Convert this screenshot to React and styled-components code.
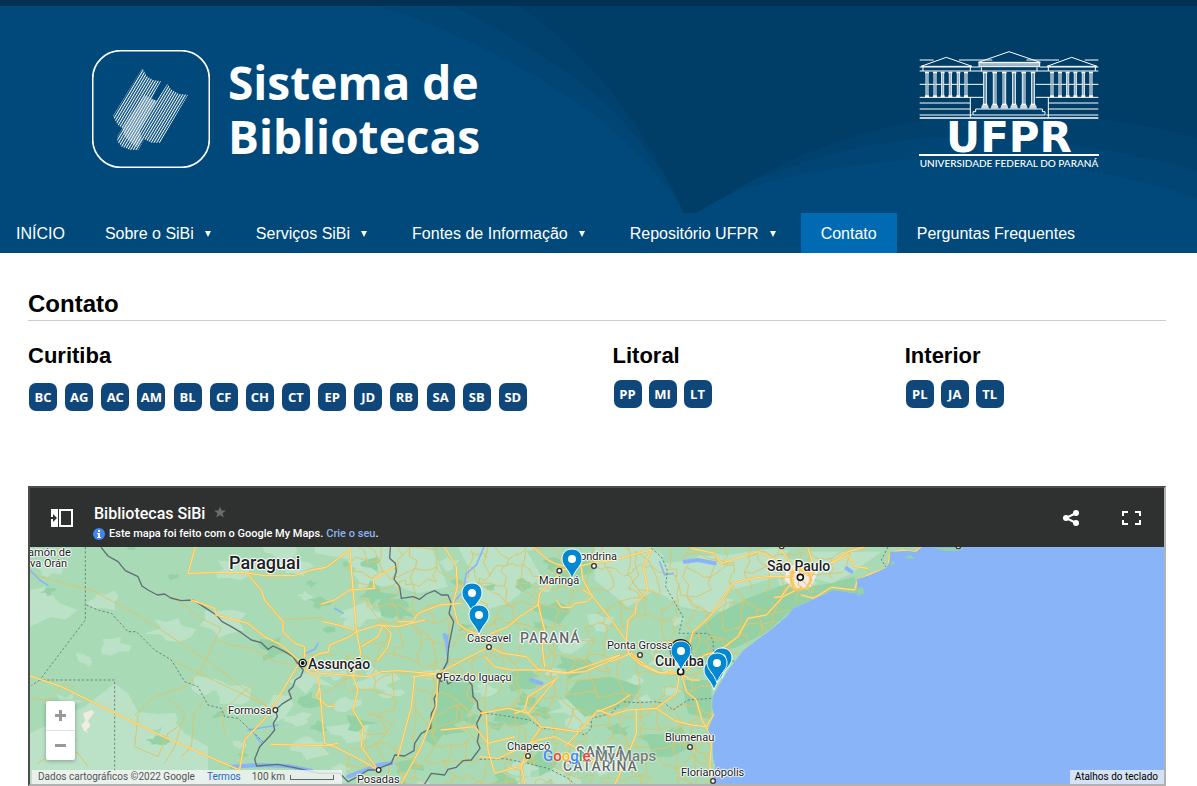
import React from "react";
import styled, { createGlobalStyle, css } from "styled-components";

const GlobalStyle = createGlobalStyle`
  *, *::before, *::after { box-sizing: border-box; }
  body { margin: 0; background: #fff; color: #000; font: 16px/24px Arial, "Liberation Sans", sans-serif; }
  h1, h2, p, ul { margin: 0; padding: 0; }
  ul { list-style: none; }
  a { color: inherit; text-decoration: none; }
  button { padding: 0; border: 0; background: none; color: inherit; font: inherit; cursor: pointer; }
  svg { display: block; }
`;

/* ---------- Header ---------- */

const Header = styled.header`
  position: relative;
  background: #00497a;
  border-top: 6px solid #003152;
`;
const HeaderArt = styled.svg`
  position: absolute;
  inset: 0;
  width: 100%;
  height: 100%;
`;
const HeaderInner = styled.div`
  position: relative;
  display: flex;
  justify-content: space-between;
  align-items: flex-start;
  padding: 44px 98px 43px 92px;
`;
const Brand = styled.a`
  display: flex;
  align-items: center;
  gap: 18px;
  color: #fff;
`;
const BrandName = styled.span`
  font: 700 46px/54px "Open Sans", "Noto Sans", sans-serif;
`;
const University = styled.a`
  display: flex;
  flex-direction: column;
  align-items: center;
  width: 180px;
  color: #fff;
`;
const UniversityInitials = styled.span`
  font: 700 42px/33px "DejaVu Sans", sans-serif;
`;
const UniversityName = styled.span`
  width: 100%;
  border-top: 2px solid #fff;
  font: 500 10px/14px Lato, sans-serif;
  text-align: center;
  white-space: nowrap;
`;

const Nav = styled.nav`
  background: #00497a;
  padding-right: 20px;
`;
const NavList = styled.ul`
  display: flex;
  flex-wrap: wrap;
  margin-left: -4px;
`;
const NavLink = styled.a`
  display: flex;
  align-items: center;
  height: 40px;
  padding: 2px 20px 0;
  color: #fff;
  background: ${(p) => (p.$active ? "#006ab3" : "transparent")};
`;
const Caret = styled.span`
  margin: 0 5px 0 11px;
  border: 3px solid transparent;
  border-top: 6px solid #fff;
  border-bottom: 0;
`;

/* ---------- Contact section ---------- */

const Main = styled.main`
  padding: 38px 31px 0 28px;
`;
const PageTitle = styled.h1`
  padding-bottom: 3px;
  border-bottom: 1px solid #ccc;
  font-size: 24px;
  line-height: 26px;
`;
const Regions = styled.div`
  display: grid;
  grid-template-columns: 2fr 1fr 1fr;
  margin-right: -31px;
  min-height: 165px;
  padding-top: 22px;
`;
const RegionTitle = styled.h2`
  font-size: 22px;
  line-height: 26px;
`;
const Badges = styled.ul`
  display: flex;
  flex-wrap: wrap;
  gap: 7px;
  padding: 11px 0 0 1px;
  ${(p) =>
    p.$wide &&
    css`
      justify-content: space-between;
      max-width: 499px;
      padding-top: 14px;
    `}
`;
const Badge = styled.a`
  display: flex;
  align-items: center;
  justify-content: center;
  width: 28px;
  height: 28px;
  border-radius: 7px;
  background: #10477a;
  color: #fff;
  font: 700 13px/28px "Open Sans", "Noto Sans", sans-serif;
`;

/* ---------- Map ---------- */

const MapFrame = styled.section`
  border: 2px solid;
  border-color: #4c4c4c #b2b2b2 #b2b2b2 #4c4c4c;
  font-family: Roboto, sans-serif;
`;
const MapHeader = styled.div`
  display: flex;
  align-items: center;
  height: 59px;
  padding: 0 22px 0 20px;
  background: #2f3130;
  color: #fff;
`;
const MapHeading = styled.div`
  flex: 1;
  padding: 8px 0 0 20px;
`;
const MapTitle = styled.div`
  display: flex;
  align-items: center;
  gap: 9px;
  font-size: 16px;
  font-weight: 500;
  line-height: 24px;
  svg { margin-bottom: 4px; }
`;
const MapNote = styled.p`
  display: flex;
  align-items: center;
  font-size: 11px;
  font-weight: 500;
  line-height: 16px;
  a { color: #8ab4f0; margin-left: 3px; }
  svg { margin: 0 4px 0 -1px; }
`;
const MapActions = styled.div`
  display: flex;
  gap: 40px;
`;
const MapViewport = styled.div`
  position: relative;
  height: 237px;
  overflow: hidden;
  background: #8ab4f8;
`;
const MapCanvas = styled.div`
  position: absolute;
  inset: 0 auto auto 0;
  width: 1134px;
  height: 237px;
`;
const Place = styled.span`
  position: absolute;
  left: ${(p) => p.$x}px;
  top: ${(p) => p.$y}px;
  transform: translateY(-50%);
  color: ${(p) => (p.$state ? "#5f6b6b" : "#202124")};
  font-size: ${(p) => p.$size || 11}px;
  font-weight: ${(p) => (p.$size ? 500 : 400)};
  line-height: 1;
  white-space: nowrap;
  letter-spacing: ${(p) => (p.$state ? "1px" : "normal")};
  text-shadow: 0 0 2px #fff, 0 0 2px #fff, 1px 0 1px #fff, -1px 0 1px #fff, 0 1px 1px #fff, 0 -1px 1px #fff;
`;
const Pin = styled.svg`
  position: absolute;
  left: ${(p) => p.$x - 11}px;
  top: ${(p) => p.$y - 31}px;
`;
const ZoomControl = styled.div`
  position: absolute;
  left: 16px;
  bottom: 24px;
  display: flex;
  flex-direction: column;
  width: 29px;
  border-radius: 2px;
  background: #fff;
  box-shadow: 0 1px 4px rgba(0, 0, 0, 0.3);
  button {
    display: grid;
    place-items: center;
    height: 29px;
  }
  button + button { border-top: 1px solid #e0e0e0; height: 30px; }
`;
const Credits = styled.div`
  position: absolute;
  left: 2px;
  bottom: 0;
  display: flex;
  align-items: center;
  height: 14px;
  width: 310px;
  padding: 0 6px;
  background: rgba(245, 245, 245, 0.78);
  color: #555;
  font-size: 10px;
  line-height: 14px;
  white-space: nowrap;
  a { color: #2a66d0; margin: 0 11px 0 12px; }
`;
const Scale = styled.span`
  width: 44px;
  height: 5px;
  margin-left: 5px;
  border: 1px solid #666;
  border-top: 0;
`;
const Shortcuts = styled.button`
  position: absolute;
  right: 0;
  bottom: 0;
  height: 14px;
  padding: 0 6px 0 5px;
  background: #d5e2f6;
  color: #000;
  font-size: 10px;
  line-height: 14px;
`;
const MapsLogo = styled.span`
  position: absolute;
  left: 513px;
  top: 199px;
  display: flex;
  gap: 4px;
  font: 500 15px/20px Roboto, sans-serif;
  text-shadow: 0 0 2px #fff, 0 0 2px #fff;
`;
const Tint = styled.span`
  color: ${(p) => p.$c};
`;

/* ---------- Map artwork ---------- */

// Repeatable pseudo-random value for the local road web and vegetation patches.
const noise = (a, b, c = 0) => {
  const v = Math.sin(a * 127.1 + b * 311.7 + c * 74.7) * 43758.5453;
  return v - Math.floor(v);
};

const localRoads = (() => {
  const step = 52;
  const at = (i, j) => [
    Math.round(i * step + (noise(i, j) - 0.5) * 44),
    Math.round(170 + j * step + (noise(i, j, 5) - 0.5) * 44),
  ];
  const bend = (p, q, s) =>
    `M${p}L${Math.round(p[0] * 0.65 + q[0] * 0.35 + (noise(p[0], q[1], s) - 0.5) * 24)} ${Math.round(
      p[1] * 0.65 + q[1] * 0.35 + (noise(q[0], p[1], s) - 0.5) * 24
    )}L${Math.round(p[0] * 0.3 + q[0] * 0.7 + (noise(p[1], q[0], s) - 0.5) * 22)} ${Math.round(
      p[1] * 0.3 + q[1] * 0.7 + (noise(q[1], p[0], s) - 0.5) * 22
    )}L${q}`;
  let d = "";
  for (let i = -3; i < 27; i++) {
    for (let j = 0; j < 16; j++) {
      if (noise(i, j, 1) > 0.28) d += bend(at(i, j), at(i + 1, j), 1);
      if (noise(i, j, 2) > 0.3) d += bend(at(i, j), at(i, j + 1), 2);
      if (noise(i, j, 3) > 0.84) d += bend(at(i, j), at(i + 1, j + 1), 3);
    }
  }
  return d;
})();

const patches = (count, seed, x0, width, size) => {
  let d = "";
  for (let n = 0; n < count; n++) {
    const cx = x0 + noise(n, seed) * width;
    const cy = 190 + noise(n, seed, 2) * 730;
    const r = size * (0.35 + noise(n, seed, 3));
    for (let k = 0; k < 11; k++) {
      const a = (k / 11) * Math.PI * 2;
      const q = r * (0.35 + noise(n, k, seed) * 0.85);
      d += `${k ? "L" : "M"}${Math.round(cx + Math.cos(a) * q * 1.4)} ${Math.round(cy + Math.sin(a) * q * 0.8)}`;
    }
    d += "Z";
  }
  return d;
};

const lightPatches = patches(85, 4, -1100, 2300, 42);
const darkPatches = patches(38, 9, -300, 1350, 36);
const westDark = patches(9, 13, -1050, 700, 30);

const LAND =
  "M-1110 195H1576L1556 215L1526 212L1476 215L1474 245L1466 262L1416 285L1376 298L1378 332L1370 340L1306 330L1246 358L1186 385L1165 410L1110 455L1070 485L1035 512L1014 540L990 572L960 620L944 650L942 680L948 705L930 750L944 780L945 830L952 860L940 915H-1110Z";

const HIGHWAYS = [
  // Western plains, Paraguay
  "M-1104 588L-1010 620L-700 772L-480 868",
  "M-608 201L-630 280L-560 278L-460 278L-400 287L-310 287L-260 270L-215 262L-145 210",
  "M-455 278L-410 330L-400 360L-345 425L-345 455L-310 490L-280 500L-280 530",
  "M-620 360L-550 385L-545 405L-450 430L-400 470L-350 495L-310 530L-285 550",
  "M-145 201L-135 330L-125 450L-112 520L-135 590L-120 630L-135 690L-105 740L-110 800L-60 870",
  "M-285 550L-235 520L-210 517L-205 495L-145 470L-125 455L-60 435L0 440L80 420",
  "M-285 552L-230 580L-160 585L-90 590L-50 575L0 572L117 582",
  "M-300 555L-375 680L-385 700L-460 780L-475 868",
  "M-280 570L-240 590L-235 620L-245 650L-210 680L-190 678",
  "M-235 625L-225 740L-220 790L-190 800L-120 835L-60 870",
  "M-380 793L-300 795L-220 797L-180 790",
  "M-230 372L-190 360L-145 330L-70 325L-75 300L-10 260",
  "M-225 425L-180 435L-130 450", "M-110 500L-60 470L-45 435L-20 460L-30 500L-60 540",
  // Paraná
  "M140 201L175 260L178 320L165 372L180 430L205 450L242 462L275 500L315 520L385 530L420 568L510 578L580 555L620 540L665 525",
  "M0 425L45 425L60 400L125 375L165 372L190 370",
  "M275 500L215 530L130 575L120 582L45 590",
  "M275 462L330 440L365 410L420 375L425 340L475 290L484 272L550 255",
  "M420 372L440 450L433 500L440 560",
  "M405 201L450 240L470 250L520 265L580 250L650 240L700 225L760 210",
  "M550 262L555 300L580 345L640 420L690 490L690 520L730 555L780 578L845 580L880 600L905 600",
  "M555 330L585 348L565 365L530 370L520 382L490 382L475 360",
  "M760 210L735 260L750 330L715 370L712 400L690 420L685 480",
  "M665 525L620 550L560 575L500 580L430 570L340 570L290 560L262 530",
  "M640 545L700 520L740 555L790 580L825 568",
  "M850 575L885 455L935 410L1005 310L1060 295L1110 290L1180 290",
  "M1205 260L1175 290L1195 330L1155 350L1105 405L1050 415L1020 470L980 500L955 515L920 525L865 572",
  "M850 580L865 635L895 660L912 720L935 760L940 800L935 860L943 905",
  "M845 580L835 640L775 685L690 690L640 705L600 690L550 748L500 800",
  "M775 685L830 722L880 735L925 740L955 690",
  "M600 695L660 670L695 645", "M715 690L715 760L680 850L650 915",
  "M120 585L115 680L70 800L10 910", "M50 590L40 680L0 830",
  "M250 700L330 685L390 700L480 590", "M265 705L270 810L290 880L360 860L400 830",
  "M350 700L380 690L430 740L540 755", "M380 690L390 650L470 600",
  "M245 830L300 835L420 780L470 770L530 800L570 840L640 850L690 840",
  "M130 750L230 740L270 790L350 770", "M430 740L390 800L370 860L380 910",
  // São Paulo
  "M880 205L950 220L970 250L1080 215L1140 240L1180 280", "M1146 201L1176 250L1186 290",
  "M1186 300L1150 350L1130 352", "M1205 260L1230 285L1290 255L1350 215L1400 201",
  "M1210 345L1246 355L1300 322L1370 330L1378 300L1416 282L1470 262L1475 220L1510 210L1550 215L1570 201",
  "M1240 270L1300 250L1350 225L1370 260L1410 265", "M1230 205L1245 250L1215 285",
];

const RIVER_BORDERS = [
  "M-890 203L-870 228L-840 245L-818 272L-780 290L-768 318L-750 330L-722 345L-700 342L-682 354L-650 362L-615 360L-580 382L-545 405L-528 425L-500 440L-470 458L-440 480L-410 488L-390 508L-375 498L-345 512L-315 530L-300 552L-284 570L-292 590L-308 600L-315 620L-328 632L-320 655L-345 670L-368 690L-362 710L-374 730L-370 750L-388 772L-415 800L-430 838L-424 858L-360 853L-300 865L-235 880L-175 880L-150 905L-120 890L-90 870L-70 870L-20 850L-10 825L20 828L48 812L50 790L70 760L98 745L100 700L112 680L108 655L120 635L125 590",
  "M-23 203L-25 235L-8 250L-5 275L-12 298L5 320L10 355L45 350L65 358L85 342L110 332L130 345L150 345L160 370L153 400L167 425L152 500L148 545L125 590L128 605L145 598L150 612L180 595L210 602L222 615L225 650L238 665L240 685L252 698L236 730L243 760L238 785L246 805L220 840L195 842L175 862L150 868L140 885L100 880L80 912",
];
const DASHED_BORDERS = [
  "M-938 201V420L-1075 600H-850V880", "M-1075 600L-1100 617",
  "M-935 375L-900 390L-860 400L-810 455L-785 455L-730 510L-680 540L-640 605L-600 620L-570 675L-530 685L-520 710L-480 715L-400 790",
  "M265 700L305 705L395 720L430 745L530 752L560 765L580 745L580 715L640 700L670 665L720 668L770 665L800 670L825 690L870 660L940 655",
  "M760 205L790 230L808 270L803 320L855 410L843 460L930 460L945 480L947 530L1014 545",
  "M245 838L320 836L390 850L450 865L510 895L530 912", "M1470 201L1450 240L1465 262",
];
const COUNTRY_TRACKS = [
  "M-1104 280L-1000 310L-920 330L-780 405L-680 470L-560 550L-380 690L-370 700",
  "M-690 345L-640 375L-600 410L-530 445L-550 480L-590 570L-640 620L-730 650L-790 705",
  "M-540 480L-500 495L-440 505L-380 540L-310 555", "M-670 545L-450 650L-380 685",
  "M-690 655L-640 700L-670 800L-700 850", "M-580 660L-610 700L-620 800L-650 830",
  "M-780 705L-790 800L-720 830L-690 760L-660 740", "M-520 760L-530 700L-470 640L-430 610",
  "M-1100 655L-1050 660L-1000 610L-970 620", "M-1080 850L-1010 800L-960 820L-930 860",
  "M-345 420L-230 412L-225 425", "M-290 525L-190 525", "M-220 640L-160 600L-140 590",
];
const RIVERS = [
  "M257 203L235 255L205 280L195 335L168 365", "M-1104 270L-1075 300L-1050 316", "M-275 520L-250 508L-240 490",
  "M-190 385L-165 400", "M150 465L145 500L150 545L125 590L118 650", "M-450 750L-360 735", "M-430 763L-410 790", "M785 245L800 285L825 280",
];

function MapArt() {
  return (
    <svg width="1134" height="237" viewBox="-1104 201 3402 711" aria-hidden="true">
      <defs>
        <clipPath id="land"><path d={LAND} /></clipPath>
        <clipPath id="east">
          <path d="M-205 195H1460L1180 380L940 650V915H-100L-175 860L-90 700L-210 560L-100 480L-60 420L-180 300Z" />
        </clipPath>
      </defs>
      <rect x="-1104" y="201" width="3402" height="711" fill="#8ab4f8" />
      <path d={LAND} fill="#a8dab5" />
      <g clipPath="url(#land)">
        <path d={lightPatches} fill="#bbe2c6" />
        <path d="M-1104 330L-1060 320L-1015 370L-960 390L-1000 420L-1040 410L-1104 440ZM-850 610L-810 640L-760 735L-720 770L-690 700L-640 760L-570 800L-570 912H-1104V760L-1020 720L-940 680ZM-250 201H100L150 320L60 340L-60 300L-130 240L-250 220ZM180 201H380L430 290L330 370L220 400L190 340L210 260ZM590 201H760L800 250L950 230L1150 201L1180 280L1000 330L950 400L850 380L770 330L690 380L590 300ZM1240 215H1450L1360 280L1300 310L1230 290Z" fill="#bbe2c6" />
        <path d={westDark} fill="#94d2a5" />
        <path d={darkPatches} fill="#94d2a5" />
        <path d="M1170 310L1060 350L960 400L900 450L860 470L870 510L960 520L1020 500L1110 455L1186 385L1246 358L1230 330ZM130 600L220 610L235 660L200 720L150 740L110 800L80 780L110 680ZM540 600L640 590L730 620L690 680L560 710L500 650ZM850 600L940 600L940 720L870 700ZM1230 320L1300 310L1370 290L1378 340L1300 335L1240 350ZM810 760L850 740L880 800L820 830L740 830Z" fill="#94d2a5" />
        <path d="M-945 700L-918 690L-912 698L-930 722L-922 738L-935 750L-930 758L-942 752L-950 735L-938 722ZM1165 260L1210 250L1260 275L1240 320L1190 330L1160 300Z" fill="#f2ece0" />
        <g clipPath="url(#east)"><path d={localRoads} fill="none" stroke="#dcc56c" strokeWidth="3" strokeLinejoin="round" /></g>
        <g fill="none" strokeLinejoin="round" strokeLinecap="round">
          <g stroke="#d9c672" strokeWidth="3">{COUNTRY_TRACKS.map((d) => <path key={d} d={d} />)}</g>
          <g stroke="#8ab4f8" strokeWidth="5">{RIVERS.map((d) => <path key={d} d={d} />)}</g>
          <path d="M-500 860L-420 855L-330 858L-260 872M-150 890L-110 875L-60 855L-20 850M140 465L150 500M400 600L430 610M860 245L900 240L950 250M1346 265L1360 275" stroke="#8ab4f8" strokeWidth="12" />
          <g stroke="#5f6f75" strokeWidth="4">{RIVER_BORDERS.map((d) => <path key={d} d={d} />)}</g>
          <g stroke="#6c8580" strokeWidth="3" strokeDasharray="7 6" strokeLinecap="butt">{DASHED_BORDERS.map((d) => <path key={d} d={d} />)}</g>
          <g stroke="#f6c050" strokeWidth="6">{HIGHWAYS.map((d) => <path key={d} d={d} />)}</g>
          <g stroke="#ffe293" strokeWidth="3">{HIGHWAYS.map((d) => <path key={d} d={d} />)}</g>
          <path d="M1180 280L1195 268L1230 275L1240 300L1225 325L1190 330L1180 305Z" stroke="#f9c55f" strokeWidth="7" />
        </g>
      </g>
      <path d="M1374 325L1395 322L1398 340L1378 348ZM1520 235L1536 224L1552 236ZM1478 245L1492 248L1480 258ZM1600 203H1700L1680 212L1640 212Z" fill="#94d2a5" />
      <g fill="#fff" stroke="#333" strokeWidth="4">
        {[[484, 272], [588, 258], [273, 501], [124, 588], [726, 525], [876, 801], [390, 828], [945, 903], [-368, 690], [-58, 870], [1151, 199], [1681, 199]].map(([x, y]) => (
          <circle key={`${x}-${y}`} cx={x} cy={y} r="7" />
        ))}
        <circle cx="848" cy="575" r="9" stroke="#111" strokeWidth="5" />
        <circle cx="1207" cy="292" r="9" stroke="#111" strokeWidth="5" />
        <circle cx="-286" cy="549" r="11" stroke="#111" strokeWidth="4" />
      </g>
      <circle cx="-286" cy="549" r="6" fill="#111" />
      <circle cx="848" cy="510" r="33" fill="#202124" />
    </svg>
  );
}

const PLACES = [
  ["amón de", -2, 5], ["va Orán", 0, 16], ["Paraguai", 199, 16, 18], ["Assunção", 278, 117, 14],
  ["Formosa", 198, 163], ["Posadas", 327, 232], ["Foz do Iguaçu", 413, 130], ["Cascavel", 437, 91],
  ["Maringá", 509, 33], ["ondrina", 550, 9], ["Ponta Grossa", 577, 98], ["Curitiba", 625, 114, 14],
  ["Blumenau", 635, 190], ["Florianópolis", 651, 225], ["Chapecó", 477, 199], ["São Paulo", 737, 19, 14],
];
const STATES = [["PARANÁ", 490, 91, 14], ["SANTA", 546, 205, 14], ["CATARINA", 533, 219, 14]];
const PINS = [[542, 32], [442, 66], [449, 88], [651, 124], [692, 131], [684, 143], [687, 136]];

/* ---------- Logos and icons ---------- */

function LibraryMark() {
  return (
    <svg width="118" height="118" viewBox="0 0 354 354" aria-hidden="true">
      <defs>
        <pattern id="hatch" width="7" height="20" patternUnits="userSpaceOnUse" patternTransform="rotate(31)">
          <rect width="3" height="20" fill="#fff" />
        </pattern>
      </defs>
      <rect x="2" y="2" width="350" height="350" rx="84" fill="none" stroke="#fff" strokeWidth="5" />
      <g transform="translate(39 30)">
        <path fill="url(#hatch)" d="M112 24L125 48L145 60L168 64L152 92L140 118L155 122L187 72L200 90L222 102L249 104L165 248H140L118 238L100 270L75 269L50 260L38 245L36 230L52 205L38 195L24 168Z" />
        <path fill="#fff" opacity=".35" d="M118 105L155 122L105 212L110 238L95 262L60 230L52 205Z" />
      </g>
    </svg>
  );
}

function Column({ x, top, bottom, w }) {
  return (
    <g>
      <rect x={x - w} y={top} width={w * 2} height="5" fill="#fff" />
      <path d={`M${x - w + 3} ${top + 4}V${bottom}M${x + w - 3} ${top + 4}V${bottom}`} stroke="#fff" strokeWidth="3" />
      <path d={`M${x} ${top + 4}V${bottom}`} stroke="#9db7c9" strokeWidth="4" />
      <rect x={x - w} y={bottom - 5} width={w * 2} height="6" fill="#fff" />
    </g>
  );
}

function Building() {
  const wing = [0, 24, 47, 70, 94, 117];
  const center = [256, 285, 314, 343, 372, 400];
  return (
    <svg width="180" height="71" viewBox="58 28 540 213" fill="none" stroke="#fff" strokeWidth="3" aria-hidden="true">
      <path d="M60 58H102M178 58H278M380 58H478M555 58H596M60 79H240M420 79H596M60 91H596M60 131H250M408 131H596M60 170H250M408 170H596M60 187H212M446 187H596M60 205H212M446 205H596M60 223H218M440 223H596" />
      <path d="M60 232H596" strokeWidth="5" />
      <path d="M64 77L140 50L217 77ZM442 77L516 50L592 77ZM236 65L328 33L422 65ZM70 79V91M212 79V91M446 79V91M587 79V91M212 170V232M446 170V232" />
      <path d="M238 66H420V78H238Z" fill="#9db7c9" />
      <path d="M245 80V92M412 80V92M228 205H428V213H436V223H220V213H228Z" />
      <g stroke="none">
        {wing.map((x) => <Column key={x} x={82 + x} top={93} bottom={169} w={6} />)}
        {wing.map((x) => <Column key={x} x={457 + x} top={93} bottom={169} w={6} />)}
        {center.map((x) => <Column key={x} x={x} top={93} bottom={194} w={7} />)}
        {center.map((x) => <path key={x} d={`M${x - 9} 193H${x + 9}L${x + 12} 204H${x - 12}Z`} fill="#cbd9e3" />)}
      </g>
    </svg>
  );
}

const NAV = [
  { text: "INÍCIO" }, { text: "Sobre o SiBi", menu: true }, { text: "Serviços SiBi", menu: true },
  { text: "Fontes de Informação", menu: true }, { text: "Repositório UFPR", menu: true },
  { text: "Contato", active: true }, { text: "Perguntas Frequentes" },
];
const REGIONS = [
  { name: "Curitiba", wide: true, codes: ["BC", "AG", "AC", "AM", "BL", "CF", "CH", "CT", "EP", "JD", "RB", "SA", "SB", "SD"] },
  { name: "Litoral", codes: ["PP", "MI", "LT"] },
  { name: "Interior", codes: ["PL", "JA", "TL"] },
];

export default function App() {
  return (
    <>
      <GlobalStyle />
      <Header>
        <HeaderArt viewBox="0 6 1197 207" preserveAspectRatio="none" aria-hidden="true">
          <path fill="#004574" d="M350 0Q390 5 467 40Q560 85 607 125Q660 170 684 213H696Q730 190 767 182Q860 160 950 157Q1080 160 1197 198V0Z" />
          <path fill="#00416e" d="M440 0Q500 27 573 77Q648 133 684 213H696Q730 186 767 175Q850 142 940 137Q1080 137 1197 171V0Z" />
          <path fill="#003e68" d="M508 0Q573 38 623 107Q660 157 684 213H696L767 172Q850 127 967 114Q1100 110 1197 138V0Z" />
        </HeaderArt>
        <HeaderInner>
          <Brand href="#">
            <LibraryMark />
            <BrandName>Sistema de<br />Bibliotecas</BrandName>
          </Brand>
          <University href="#">
            <Building />
            <UniversityInitials>UFPR</UniversityInitials>
            <UniversityName>UNIVERSIDADE FEDERAL DO PARANÁ</UniversityName>
          </University>
        </HeaderInner>
      </Header>
      <Nav>
        <NavList>
          {NAV.map((item) => (
            <li key={item.text}>
              <NavLink href="#" $active={item.active}>{item.text}{item.menu && <Caret />}</NavLink>
            </li>
          ))}
        </NavList>
      </Nav>
      <Main>
        <PageTitle>Contato</PageTitle>
        <Regions>
          {REGIONS.map((r) => (
            <section key={r.name}>
              <RegionTitle>{r.name}</RegionTitle>
              <Badges $wide={r.wide}>
                {r.codes.map((c) => <li key={c}><Badge href="#">{c}</Badge></li>)}
              </Badges>
            </section>
          ))}
        </Regions>
        <MapFrame>
          <MapHeader>
            <button aria-label="Mostrar legenda">
              <svg width="24" height="20" viewBox="0 0 24 20">
                <path d="M1 1H8V19H1Z" fill="#fff" />
                <path d="M0 9H3V6L7 10L3 14V11H0Z" fill="#2f3130" />
                <path d="M10 2H22V18H10Z" fill="none" stroke="#fff" strokeWidth="2" />
              </svg>
            </button>
            <MapHeading>
              <MapTitle>
                Bibliotecas SiBi
                <svg width="12" height="12" viewBox="0 0 24 24"><path fill="#6c6c6c" d="M12 1l3 8h9l-7 5.500 2.600 8.500L12 18l-7.600 5L7 14.500 0 9h9z" /></svg>
              </MapTitle>
              <MapNote>
                <svg width="12" height="12" viewBox="0 0 12 12"><circle cx="6" cy="6" r="6" fill="#4285f4" /><path d="M5 2H7V4H5ZM4 5H7V9H8V10H4V9H5V6H4Z" fill="#fff" /></svg>
                Este mapa foi feito com o Google My Maps. <a href="#">Crie o seu</a>.
              </MapNote>
            </MapHeading>
            <MapActions>
              <button aria-label="Compartilhar">
                <svg width="20" height="20" viewBox="0 0 20 20"><path d="M15 5L5 10L15 15" fill="none" stroke="#fff" strokeWidth="2" /><g fill="#fff"><circle cx="15" cy="5" r="3" /><circle cx="5" cy="10" r="3" /><circle cx="15" cy="15" r="3" /></g></svg>
              </button>
              <button aria-label="Tela cheia">
                <svg width="21" height="16" viewBox="0 0 21 16" fill="none" stroke="#fff" strokeWidth="2"><path d="M2 6V2H7M14 2H19V6M19 10V14H14M7 14H2V10" /></svg>
              </button>
            </MapActions>
          </MapHeader>
          <MapViewport>
            <MapCanvas>
              <MapArt />
              {STATES.map(([t, x, y, s]) => <Place key={t} $x={x} $y={y} $size={s} $state>{t}</Place>)}
              {PLACES.map(([t, x, y, s]) => <Place key={t} $x={x} $y={y} $size={s}>{t}</Place>)}
              {PINS.map(([x, y]) => (
                <Pin key={x} $x={x} $y={y} width="22" height="32" viewBox="0 0 22 32" aria-hidden="true">
                  <path d="M11 1C5 1 1 5 1 11C1 18 8 21 11 31C14 21 21 18 21 11C21 5 17 1 11 1Z" fill="#0288d1" stroke="#fff" strokeWidth="1" />
                  <circle cx="11" cy="11" r="4" fill="#fff" />
                </Pin>
              ))}
              <MapsLogo>
                <span>
                  <Tint $c="#4285f4">G</Tint><Tint $c="#ea4335">o</Tint><Tint $c="#fbbc04">o</Tint>
                  <Tint $c="#4285f4">g</Tint><Tint $c="#34a853">l</Tint><Tint $c="#ea4335">e</Tint>
                </span>
                <Tint $c="#6f8078">My Maps</Tint>
              </MapsLogo>
            </MapCanvas>
            <ZoomControl>
              <button aria-label="Aumentar zoom"><svg width="11" height="11" viewBox="0 0 11 11"><path d="M4 0H7V4H11V7H7V11H4V7H0V4H4Z" fill="#999" /></svg></button>
              <button aria-label="Diminuir zoom"><svg width="11" height="3" viewBox="0 0 11 3"><path d="M0 0H11V3H0Z" fill="#999" /></svg></button>
            </ZoomControl>
            <Credits>
              Dados cartográficos ©2022 Google <a href="#">Termos</a> 100 km <Scale />
            </Credits>
            <Shortcuts>Atalhos do teclado</Shortcuts>
          </MapViewport>
        </MapFrame>
      </Main>
    </>
  );
}
